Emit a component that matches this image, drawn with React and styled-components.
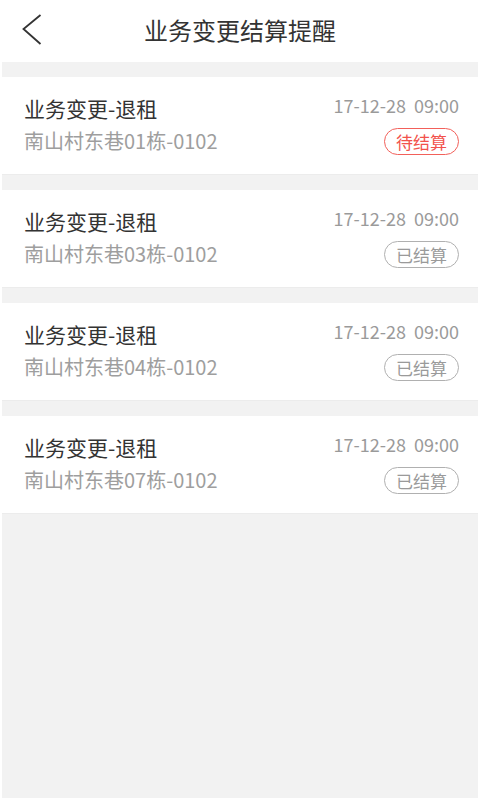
import React from "react";
import styled, { createGlobalStyle } from "styled-components";

const GlobalStyle = createGlobalStyle`
  html, body {
    margin: 0;
    padding: 0;
    background: #ffffff;
  }
  body {
    font-family: "Noto Sans CJK SC", "Noto Sans", sans-serif;
  }
`;

const Page = styled.div`
  display: flex;
  flex-direction: column;
  min-height: 100vh;
  box-sizing: border-box;
  padding: 0 2px 2px 2px;
  background: #ffffff;
`;

const Header = styled.header`
  position: relative;
  display: flex;
  align-items: center;
  justify-content: center;
  height: 62px;
  margin: 0 -2px;
  background: #ffffff;
`;

const BackButton = styled.button`
  position: absolute;
  left: 20px;
  top: 12px;
  width: 26px;
  height: 36px;
  padding: 0;
  border: none;
  background: transparent;
  cursor: pointer;
`;

const Title = styled.h1`
  margin: 0 0 4px 0;
  font-size: 24px;
  font-weight: 400;
  color: #333333;
`;

const List = styled.div`
  flex: 1;
  display: flex;
  flex-direction: column;
  gap: 15px;
  padding-top: 15px;
  background: #f2f2f2;
  border-top: 1px solid #ebebeb;
  margin-top: -1px;
`;

const Card = styled.div`
  display: flex;
  flex-direction: column;
  gap: 3px;
  height: 98px;
  box-sizing: border-box;
  padding: 16px 19px 19px 22px;
  background: #ffffff;
  border-bottom: 1px solid #ececec;
`;

const Row = styled.div`
  display: flex;
  justify-content: space-between;
  align-items: ${(p) => (p.$center ? "center" : "flex-start")};
  height: 30px;
`;

const ItemTitle = styled.span`
  font-size: 21px;
  line-height: 30px;
  color: #333333;
`;

const Address = styled.span`
  font-size: 20px;
  line-height: 30px;
  color: #9e9e9e;
`;

const DateText = styled.span`
  margin-top: 1px;
  font-size: 18px;
  line-height: 22px;
  color: #9a9a9a;
  white-space: pre;
`;

const Badge = styled.span`
  display: inline-flex;
  align-items: center;
  justify-content: center;
  box-sizing: border-box;
  width: 75px;
  height: 27px;
  border-radius: 14px;
  font-size: 17px;
  border: 1px solid ${(p) => (p.$done ? "#b0b0b0" : "#f2605a")};
  color: ${(p) => (p.$done ? "#9a9a9a" : "#f2524c")};
`;

const items = [
  { addr: "南山村东巷01栋-0102", done: false },
  { addr: "南山村东巷03栋-0102", done: true },
  { addr: "南山村东巷04栋-0102", done: true },
  { addr: "南山村东巷07栋-0102", done: true },
];

function App() {
  return (
    <>
      <GlobalStyle />
      <Page>
        <Header>
          <BackButton aria-label="返回">
            <svg width="26" height="36" viewBox="0 0 26 36">
              <polyline
                points="20.5,3 3.5,17 20.5,32"
                fill="none"
                stroke="#333333"
                strokeWidth="1.8"
              />
            </svg>
          </BackButton>
          <Title>业务变更结算提醒</Title>
        </Header>
        <List>
          {items.map((item) => (
            <Card key={item.addr}>
              <Row>
                <ItemTitle>业务变更-退租</ItemTitle>
                <DateText>17-12-28  09:00</DateText>
              </Row>
              <Row $center>
                <Address>{item.addr}</Address>
                <Badge $done={item.done}>{item.done ? "已结算" : "待结算"}</Badge>
              </Row>
            </Card>
          ))}
        </List>
      </Page>
    </>
  );
}

export default App;
